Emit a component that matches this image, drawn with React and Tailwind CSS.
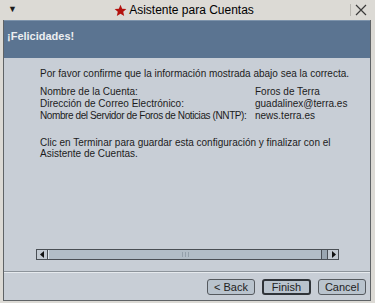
export default function App() {
  return (
    <div className="w-[375px] h-[303px] bg-[#dcdad5] flex flex-col font-['Liberation_Sans',Arial,sans-serif] text-[10px] text-[#1c1c1c] overflow-hidden">
      {/* title bar */}
      <div className="h-[20px] flex items-center px-[6px] shrink-0">
        <span className="text-[9px] leading-none w-[10px] mt-[-2px] ml-[2px]">▼</span>
        <div className="flex-1 flex items-center justify-center gap-[2px] text-[12px] text-black">
          <svg width="13" height="13" viewBox="0 0 24 24">
            <path d="M12 1.5l3.1 7.2 7.8.6-5.9 5.1 1.8 7.6L12 17.9 5.2 22l1.8-7.6L1.1 9.3l7.8-.6z" fill="#b3120e" />
          </svg>
          <span>Asistente para Cuentas</span>
        </div>
        <div className="w-px h-[12px] bg-[#b8b6b0] mr-[4px]" />
        <svg width="12" height="12" viewBox="0 0 12 12" className="mr-[2px]">
          <path d="M1 1L11 11M11 1L1 11" stroke="#3a3a3a" strokeWidth="1.2" />
        </svg>
      </div>

      {/* window frame */}
      <div className="h-[281px] flex pl-[3px] pr-[4px]">
        <div className="flex-1 flex flex-col border-x border-b border-[#5f6366] bg-[#c8ced6]">
          <div className="h-[38px] shrink-0 bg-[#5b7491] border-t border-[#7d93ab] px-[3px] pt-[7px]">
            <span className="font-bold text-[11px] text-[#eceef0]">¡Felicidades!</span>
          </div>

          <div className="h-[191px] shrink-0 pl-[36px] pt-[10px] leading-[12px] whitespace-nowrap">
            <p>Por favor confirme que la información mostrada abajo sea la correcta.</p>
            <div className="mt-[6px] grid grid-cols-[215px_1fr]">
              <span>Nombre de la Cuenta:</span>
              <span>Foros de Terra</span>
              <span>Dirección de Correo Electrónico:</span>
              <span>guadalinex@terra.es</span>
              <span className="tracking-[-0.4px]">Nombre del Servidor de Foros de Noticias (NNTP):</span>
              <span>news.terra.es</span>
            </div>
            <p className="mt-[15px] leading-[11px]">
              Clic en Terminar para guardar esta configuración y finalizar con el
              <br />
              Asistente de Cuentas.
            </p>
          </div>

          {/* scrollbar */}
          <div className="shrink-0 ml-[32px] w-[303px] h-[11px] flex border border-[#4a4f55] bg-[#aeb9c3]">
            <div className="w-[11px] h-full flex items-center justify-center bg-[#c3cad2] border-r border-[#4a4f55]">
              <svg width="5" height="7" viewBox="0 0 5 7"><path d="M4 0L0 3.5L4 7z" fill="#111" /></svg>
            </div>
            <div className="flex-1 bg-[#b2bdc7] border-l border-[#dde3e8] flex items-center justify-center">
              <div className="flex gap-[2px]">
                <div className="w-px h-[5px] bg-[#94a0ab]" />
                <div className="w-px h-[5px] bg-[#94a0ab]" />
                <div className="w-px h-[5px] bg-[#94a0ab]" />
              </div>
            </div>
            <div className="w-[7px] h-full bg-[#9aa6b1] border-x border-[#4a4f55]" />
            <div className="w-[10px] h-full flex items-center justify-center bg-[#c3cad2]">
              <svg width="5" height="7" viewBox="0 0 5 7"><path d="M1 0L5 3.5L1 7z" fill="#111" /></svg>
            </div>
          </div>

          <div className="shrink-0 mt-[11px] border-t border-[#8d949b] border-b border-b-[#e6eaee]" />

          <div className="shrink-0 flex justify-end gap-[7px] pr-[4px] pt-[6px]">
            <button className="w-[48px] h-[16px] rounded-[3px] border border-[#55595e] bg-[#b9c3cd] text-[11px] leading-none text-[#222]">&lt; Back</button>
            <button className="w-[49px] h-[16px] rounded-[3px] border-2 border-[#2f3338] bg-[#b9c3cd] text-[11px] leading-none text-[#222]">Finish</button>
            <button className="w-[48px] h-[16px] rounded-[3px] border border-[#55595e] bg-[#b9c3cd] text-[11px] leading-none text-[#222]">Cancel</button>
          </div>
        </div>
      </div>
    </div>
  );
}
